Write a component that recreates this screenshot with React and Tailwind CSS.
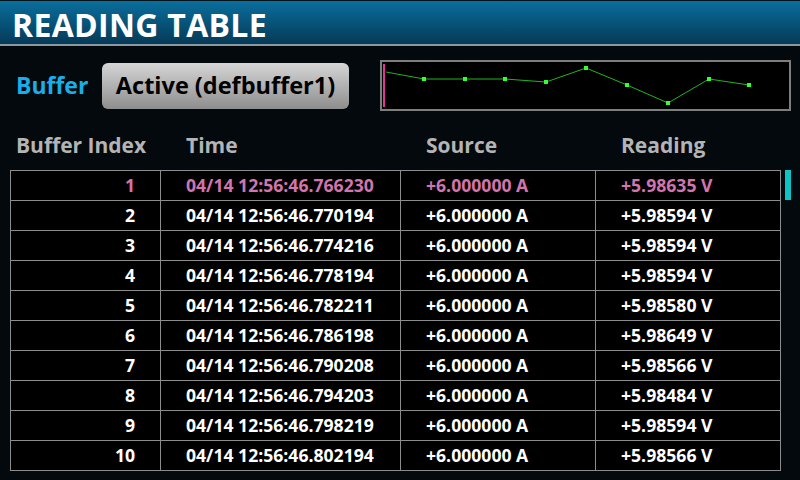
import React from 'react';

const rows = [
  ['1', '04/14 12:56:46.766230', '+6.000000 A', '+5.98635 V'],
  ['2', '04/14 12:56:46.770194', '+6.000000 A', '+5.98594 V'],
  ['3', '04/14 12:56:46.774216', '+6.000000 A', '+5.98594 V'],
  ['4', '04/14 12:56:46.778194', '+6.000000 A', '+5.98594 V'],
  ['5', '04/14 12:56:46.782211', '+6.000000 A', '+5.98580 V'],
  ['6', '04/14 12:56:46.786198', '+6.000000 A', '+5.98649 V'],
  ['7', '04/14 12:56:46.790208', '+6.000000 A', '+5.98566 V'],
  ['8', '04/14 12:56:46.794203', '+6.000000 A', '+5.98484 V'],
  ['9', '04/14 12:56:46.798219', '+6.000000 A', '+5.98594 V'],
  ['10', '04/14 12:56:46.802194', '+6.000000 A', '+5.98566 V'],
];

const points = [
  [424, 79], [465, 79], [505, 79], [546, 82], [586, 68],
  [627, 85], [668, 103], [709, 79], [749, 85],
];

function Sparkline() {
  const line = '386,72 ' + points.map(p => p.join(',')).join(' ');
  return (
    <div className="w-[411px] h-[51px] border-2 border-[#7e7e7e] bg-black">
      <svg width="407" height="47" viewBox="382 62 407 47">
        <rect x="383" y="64" width="2" height="43" fill="#e0359a" />
        <polyline points={line} fill="none" stroke="#22b322" strokeWidth="1" />
        {points.map(([x, y]) => (
          <rect key={x} x={x - 2} y={y - 2} width="4" height="4" fill="#33ff33" />
        ))}
      </svg>
    </div>
  );
}

export default function App() {
  return (
    <div
      className="w-[800px] h-[480px] bg-[#03090d] overflow-hidden font-bold"
      style={{ fontFamily: '"Open Sans", "Noto Sans", sans-serif' }}
    >
      {/* Title bar */}
      <div className="h-[46px] border-t border-[#03141d] bg-gradient-to-b from-[#0a6f9d] to-[#053a58] border-b-2 border-b-[#8b989e] flex items-center pl-[12px] pt-[4px]">
        <span className="text-white text-[32px] leading-none tracking-[0.3px]">READING TABLE</span>
      </div>

      {/* Buffer selector + sparkline */}
      <div className="flex items-center mt-[14px] h-[51px]">
        <span className="ml-[16px] w-[73px] text-[#18aeea] text-[23px] whitespace-nowrap">Buffer</span>
        <button className="ml-[13px] w-[247px] h-[46px] rounded-[6px] bg-gradient-to-b from-[#d6d6d6] to-[#8e8e8e] text-black text-[23.5px] flex items-center justify-center whitespace-nowrap">
          Active (defbuffer1)
        </button>
        <div className="ml-[31px]">
          <Sparkline />
        </div>
      </div>

      {/* Column headings */}
      <div className="flex h-[48px] items-center text-[#b4b4b4] text-[21px] mt-[11px]">
        <span className="w-[186px] pl-[16px]">Buffer Index</span>
        <span className="w-[240px]">Time</span>
        <span className="w-[195px]">Source</span>
        <span>Reading</span>
      </div>

      {/* Table */}
      <div className="flex">
        <table className="ml-[10px] w-[771px] border-collapse bg-black text-[17.6px] text-white">
          <tbody>
            {rows.map((r, i) => (
              <tr key={r[0]} className={i === 0 ? 'h-[30px] text-[#d274ad]' : 'h-[30px]'}>
                <td className="w-[150px] border border-[#8c8c8c] text-right pr-[25px] p-0 leading-none">{r[0]}</td>
                <td className="w-[240px] border border-[#8c8c8c] pl-[25px] p-0 leading-none">{r[1]}</td>
                <td className="w-[195px] border border-[#8c8c8c] pl-[25px] p-0 leading-none">{r[2]}</td>
                <td className="border border-[#8c8c8c] pl-[25px] p-0 leading-none">{r[3]}</td>
              </tr>
            ))}
          </tbody>
        </table>
        <div className="ml-[4px] w-[6px] h-[30px] bg-[#0cc4c4]" />
      </div>
    </div>
  );
}
